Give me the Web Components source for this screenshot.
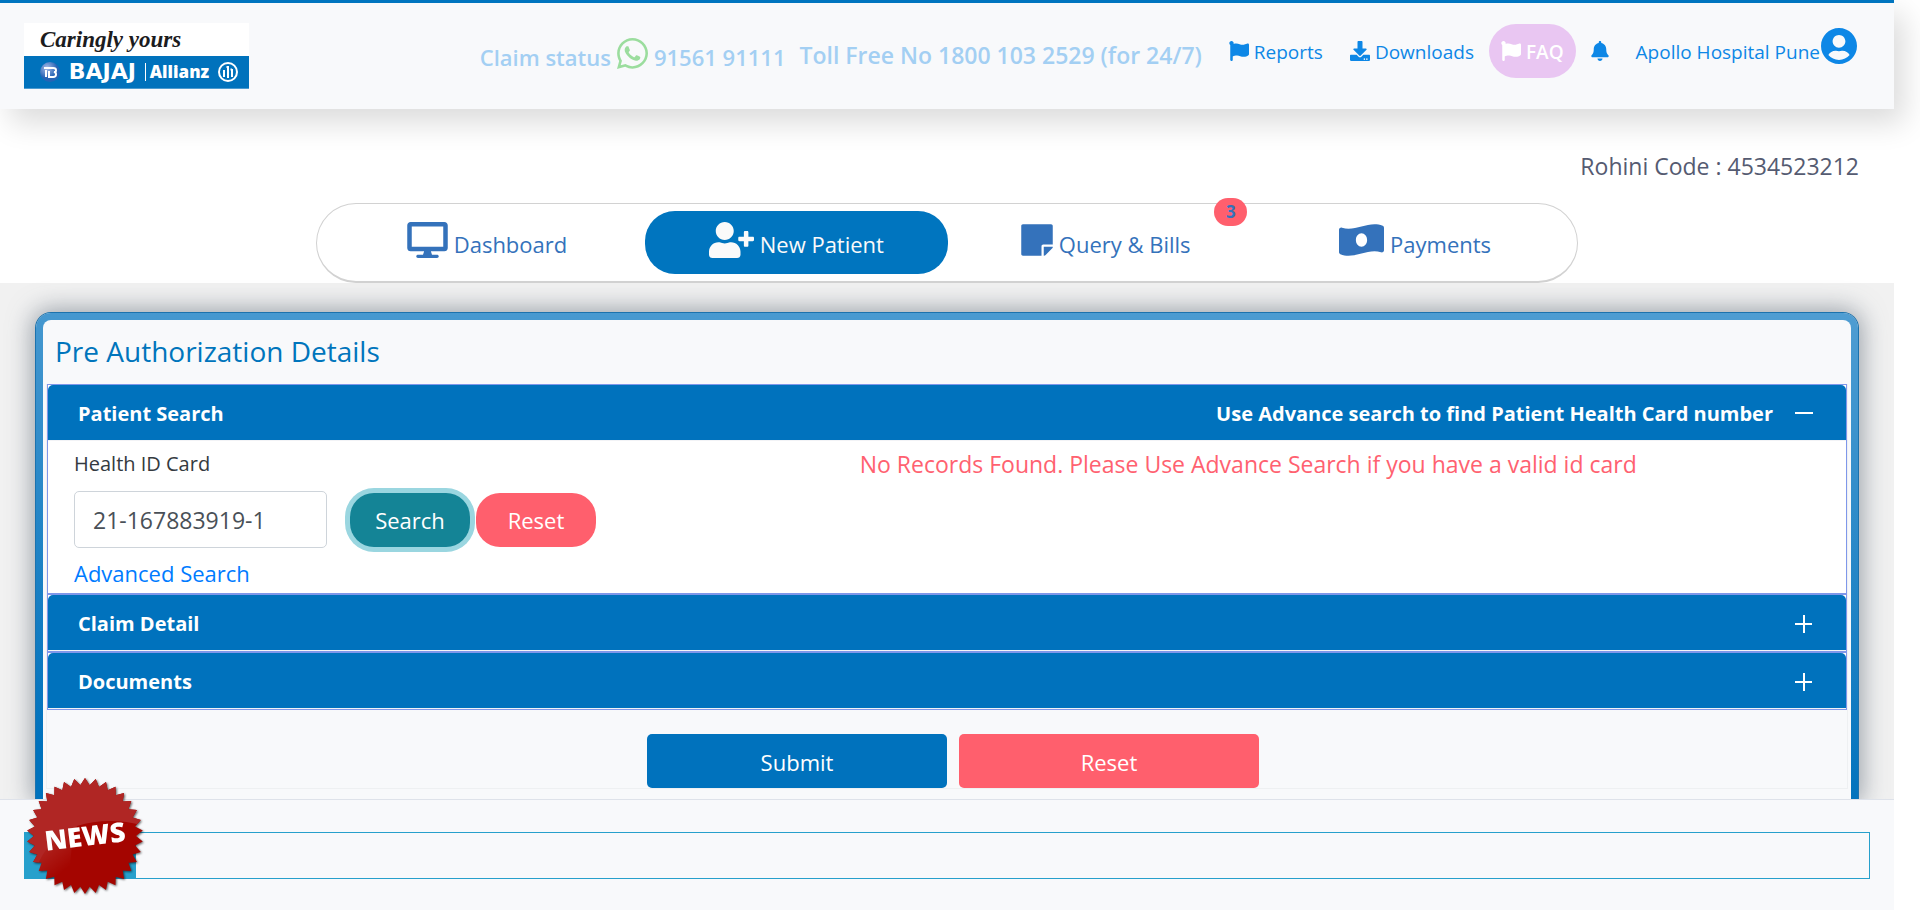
<!DOCTYPE html>
<html lang="en">
<head>
<meta charset="utf-8">
<title>Pre Authorization Details</title>
<style>
  html, body { margin: 0; background: #fff; }
  body { font-family: "Open Sans", "Noto Sans", sans-serif; font-size: 20px; color: #343a40; }
</style>
</head>
<body>
<portal-page>
  <site-header slot="header"></site-header>
  <main-tabs slot="tabs"></main-tabs>
  <auth-panel slot="content" heading="Pre Authorization Details">
    <accordion-item heading="Patient Search" note="Use Advance search to find Patient Health Card number" open>
      <patient-search></patient-search>
    </accordion-item>
    <accordion-item heading="Claim Detail"></accordion-item>
    <accordion-item heading="Documents"></accordion-item>
  </auth-panel>
  <news-ticker slot="footer"></news-ticker>
</portal-page>

<script>
const ICONS = {
  flag: ['0 0 512 512', 'M349.565 98.783C295.978 98.783 251.721 64 184.348 64c-24.955 0-47.309 4.384-68.045 12.013a55.947 55.947 0 0 0 3.586-23.562C118.117 24.015 94.806 1.206 66.338.048 34.345-1.254 8 24.296 8 56c0 19.026 9.497 35.825 24 45.945V488c0 13.255 10.745 24 24 24h16c13.255 0 24-10.745 24-24v-94.4c28.311-12.064 63.582-22.122 114.435-22.122 53.588 0 97.844 34.783 165.217 34.783 48.169 0 86.667-16.294 122.505-40.858C506.84 359.452 512 349.571 512 339.045v-243.1c0-23.393-24.269-38.87-45.485-29.016-34.338 15.948-76.454 31.854-116.95 31.854z'],
  download: ['0 0 512 512', 'M216 0h80c13.3 0 24 10.7 24 24v168h87.7c17.8 0 26.7 21.5 14.1 34.1L269.7 378.3c-7.5 7.5-19.8 7.5-27.3 0L90.1 226.1c-12.6-12.6-3.7-34.1 14.1-34.1H192V24c0-13.3 10.7-24 24-24zm296 376v112c0 13.3-10.7 24-24 24H24c-13.3 0-24-10.7-24-24V376c0-13.3 10.7-24 24-24h146.7l49 49c20.1 20.1 52.5 20.1 72.6 0l49-49H488c13.3 0 24 10.7 24 24zm-124 88c0-11-9-20-20-20s-20 9-20 20 9 20 20 20 20-9 20-20zm64 0c0-11-9-20-20-20s-20 9-20 20 9 20 20 20 20-9 20-20z'],
  bell: ['0 0 448 512', 'M224 512c35.32 0 63.97-28.65 63.97-64H160.03c0 35.35 28.65 64 63.97 64zm215.39-149.71c-19.32-20.76-55.47-51.99-55.47-154.29 0-77.7-54.48-139.9-127.94-155.16V32c0-17.67-14.32-32-31.98-32s-31.98 14.33-31.98 32v20.84C118.56 68.1 64.08 130.3 64.08 208c0 102.3-36.15 133.53-55.47 154.29-6 6.45-8.66 14.16-8.61 21.71.11 16.4 12.98 32 32.1 32h383.8c19.12 0 32-15.6 32.1-32 .05-7.55-2.61-15.27-8.61-21.71z'],
  user: ['0 8 496 496', 'M248 8C111 8 0 119 0 256s111 248 248 248 248-111 248-248S385 8 248 8zm0 96c48.6 0 88 39.4 88 88s-39.4 88-88 88-88-39.4-88-88 39.4-88 88-88zm0 344c-58.7 0-111.3-26.6-146.5-68.2 18.8-35.4 55.6-59.8 98.5-59.8 2.4 0 4.8.4 7.1 1.1 13 4.2 26.6 6.9 40.9 6.9 14.3 0 28-2.7 40.9-6.9 2.3-.7 4.7-1.1 7.1-1.1 42.9 0 79.7 24.4 98.5 59.8C359.3 421.4 306.7 448 248 448z'],
  addUser: ['0 0 640 512', 'M624 208h-64v-64c0-8.8-7.2-16-16-16h-32c-8.8 0-16 7.2-16 16v64h-64c-8.8 0-16 7.2-16 16v32c0 8.8 7.2 16 16 16h64v64c0 8.8 7.2 16 16 16h32c8.8 0 16-7.2 16-16v-64h64c8.8 0 16-7.2 16-16v-32c0-8.8-7.2-16-16-16zm-400 48c70.7 0 128-57.3 128-128S294.7 0 224 0 96 57.3 96 128s57.3 128 128 128zm89.6 32h-16.7c-22.2 10.2-46.9 16-72.9 16s-50.6-5.8-72.9-16h-16.7C60.2 288 0 348.2 0 422.4V464c0 26.5 21.5 48 48 48h352c26.5 0 48-21.5 48-48v-41.6c0-74.2-60.2-134.4-134.4-134.4z'],
  desktop: ['0 0 576 512', 'M528 0H48C21.5 0 0 21.5 0 48v320c0 26.5 21.5 48 48 48h192l-16 48h-72c-13.3 0-24 10.7-24 24s10.7 24 24 24h272c13.3 0 24-10.7 24-24s-10.7-24-24-24h-72l-16-48h192c26.5 0 48-21.5 48-48V48c0-26.5-21.5-48-48-48zm-16 352H64V64h448v288z'],
  note: ['0 0 448 512', 'M312 320h136V56c0-13.3-10.7-24-24-24H24C10.7 32 0 42.7 0 56v400c0 13.3 10.7 24 24 24h264V344c0-13.2 10.8-24 24-24zm129 55l-98 98c-4.5 4.5-10.6 7-17 7h-6V352h128v6.1c0 6.3-2.5 12.4-7 16.9z'],
  money: ['0 0 640 512', 'M621.16 54.46C582.37 38.19 543.55 32 504.75 32c-123.17-.01-246.33 62.34-369.5 62.34-30.89 0-61.76-3.92-92.65-13.72-3.47-1.1-6.95-1.62-10.35-1.62C15.04 79 0 92.32 0 110.81v317.26c0 12.63 7.23 24.6 18.84 29.46C57.63 473.81 96.45 480 135.25 480c123.17 0 246.34-62.35 369.51-62.35 30.89 0 61.76 3.92 92.65 13.72 3.47 1.1 6.95 1.62 10.35 1.62 17.21 0 32.25-13.32 32.25-31.81V83.93c-.01-12.64-7.24-24.6-18.85-29.47zM320 352c-44.19 0-80-42.99-80-96 0-53.02 35.82-96 80-96s80 42.98 80 96c0 53.03-35.83 96-80 96z'],
  whatsapp: ['0 32 448 448', 'M380.9 97.1C339 55.1 283.2 32 223.9 32c-122.4 0-222 99.6-222 222 0 39.1 10.2 77.3 29.6 111L0 480l117.7-30.9c32.4 17.7 68.9 27 106.1 27h.1c122.3 0 224.1-99.6 224.1-222 0-59.3-25.2-115-67.1-157zm-157 341.6c-33.2 0-65.7-8.9-94-25.7l-6.7-4-69.8 18.3L72 359.2l-4.4-7c-18.5-29.4-28.2-63.3-28.2-98.2 0-101.7 82.8-184.5 184.6-184.5 49.3 0 95.6 19.2 130.4 54.1 34.8 34.9 56.2 81.2 56.1 130.5 0 101.8-84.9 184.6-186.6 184.6zm101.2-138.2c-5.5-2.8-32.8-16.2-37.9-18-5.1-1.9-8.8-2.8-12.5 2.8-3.7 5.6-14.3 18-17.6 21.8-3.2 3.7-6.5 4.2-12 1.4-32.6-16.3-54-29.1-75.5-66-5.7-9.8 5.7-9.1 16.3-30.3 1.8-3.7.9-6.9-.5-9.7-1.4-2.8-12.5-30.1-17.1-41.2-4.5-10.8-9.1-9.3-12.5-9.5-3.2-.2-6.9-.2-10.6-.2-3.7 0-9.7 1.4-14.8 6.9-5.1 5.6-19.4 19-19.4 46.3 0 27.3 19.9 53.7 22.6 57.4 2.8 3.7 39.1 59.7 94.8 83.8 35.2 15.2 49 16.5 66.6 13.9 10.7-1.6 32.8-13.4 37.4-26.4 4.6-13 4.6-24.1 3.2-26.4-1.3-2.5-5-3.9-10.5-6.6z']
};

function define(name, render) {
  customElements.define(name, class extends HTMLElement {
    connectedCallback() {
      if (this.shadowRoot) return;
      const t = document.createElement('template');
      t.innerHTML = render(this);
      this.attachShadow({ mode: 'open' }).append(t.content.cloneNode(true));
    }
  });
}

define('fa-icon', el => {
  const [box, path] = ICONS[el.getAttribute('name')];
  return `<style>
    :host { display: block; flex: none; width: var(--icon-w, 20px); height: var(--icon-h, 20px); }
    svg { display: block; width: 100%; height: 100%; fill: currentColor; }
  </style><svg viewBox="${box}" aria-hidden="true"><path d="${path}"/></svg>`;
});

define('portal-page', () => `<style>
  :host { display: flex; flex-direction: column; min-height: 100vh; padding-right: 26px; box-sizing: border-box; }
  .code { margin: 40px 35px 20px; text-align: right; font-size: 23px; line-height: 34px; color: #555b71; }
  ::slotted([slot=header]) { position: relative; z-index: 1; }
  ::slotted([slot=footer]) { position: relative; z-index: 1; }
  main { display: flex; flex: 1; flex-direction: column; padding: 30px 36px 0; background: #f1f1f1; }
</style>
<slot name="header"></slot>
<div class="code">Rohini Code : 4534523212</div>
<slot name="tabs"></slot>
<main><slot name="content"></slot></main>
<slot name="footer"></slot>`);

define('brand-logo', () => `<style>
  :host { display: block; width: 225px; flex: none; }
  .tag, .bar { display: flex; align-items: center; height: 33px; box-sizing: border-box; }
  .tag { padding: 0 16px; background: #fff; color: #1c1c1e; font: italic bold 23px/30px "Liberation Serif", serif; }
  .bar { justify-content: space-between; padding: 0 11px 0 16px; background: #0072bc; color: #fff; border-bottom: 1px solid #4c9bd0; }
  svg { display: block; }
  .bajaj { font: bold 22px/32px "DejaVu Sans", sans-serif; }
  .allianz { padding-left: 4px; border-left: 1px solid #fff; font-size: 17px; font-weight: 800; line-height: 18px; }
</style>
<div class="tag">Caringly yours</div>
<div class="bar">
  <svg width="20" height="20" viewBox="0 0 20 20" aria-hidden="true">
    <defs><radialGradient id="g" cx=".35" cy=".3"><stop offset="0" stop-color="#a9bce8"/><stop offset="1" stop-color="#2663b4"/></radialGradient></defs>
    <circle cx="10" cy="10" r="10" fill="url(#g)"/>
    <path d="M4 6h9q3 0 3 2.300t-2 1.700q2 0 2 2.400T13 15H9V9M6 15V8" fill="none" stroke="#fff" stroke-width="2"/>
  </svg>
  <span class="bajaj">BAJAJ</span>
  <span class="allianz">Allianz</span>
  <svg width="20" height="20" viewBox="0 0 20 20" aria-hidden="true" fill="none" stroke="#fff">
    <circle cx="10" cy="10" r="9" stroke-width="2"/>
    <path d="M10 4v12M8.500 5H10M6 8v7M14 7v8M12.500 7.500H14" stroke-width="2"/>
  </svg>
</div>`);

define('site-header', () => `<style>
  :host { display: flex; justify-content: space-between; gap: 24px; padding: 20px 37px 20px 24px;
    border-top: 3px solid #0075bf; background: #f8f9fb; box-shadow: 10px 14px 28px rgba(0, 0, 0, .14); }
  nav { display: flex; align-items: center; height: 56px; color: #0d87e6; font-size: 19px; line-height: 28px; }
  a { display: flex; align-items: center; gap: 5px; color: inherit; text-decoration: none; white-space: nowrap; }
  .text { padding-top: 2px; }
  .claim, .toll { display: flex; align-items: center; color: #a3cff3; font-weight: 600; white-space: nowrap; }
  .claim { gap: 6px; padding-top: 12px; font-size: 22px; --icon-w: 31px; --icon-h: 31px; }
  .claim fa-icon { color: #9bdd9e; margin-bottom: 8px; }
  .toll { margin: 0 27px 0 14px; padding-top: 8px; font-size: 23px; }
  .faq { margin: 0 15px; padding: 12px; border-radius: 27px; background: #e9c6f2; color: #fff; font-weight: 600; }
  .reports { margin-right: 27px; }
  .bell { margin-right: 27px; --icon-w: 18px; }
  .user { gap: 1px; --icon-w: 36px; --icon-h: 36px; }
  .user fa-icon { margin-bottom: 10px; }
</style>
<brand-logo></brand-logo>
<nav aria-label="Account">
  <span class="claim">Claim status <fa-icon name="whatsapp"></fa-icon> <span>91561 91111</span></span>
  <span class="toll">Toll Free No 1800 103 2529 (for 24/7)</span>
  <a class="reports" href="#reports"><fa-icon name="flag"></fa-icon><span class="text">Reports</span></a>
  <a href="#downloads"><fa-icon name="download"></fa-icon><span class="text">Downloads</span></a>
  <a class="faq" href="#faq"><fa-icon name="flag"></fa-icon><span class="text">FAQ</span></a>
  <a class="bell" href="#alerts" aria-label="Notifications"><fa-icon name="bell"></fa-icon></a>
  <a class="user" href="#account"><span class="text">Apollo Hospital Pune</span><fa-icon name="user"></fa-icon></a>
</nav>`);

define('main-tabs', () => `<style>
  :host { display: block; margin: 0 16.7%; }
  nav { display: flex; gap: 6px; padding: 7px 10px 7px 18px; border: 1px solid #d2d2d2; border-bottom-width: 2px; border-radius: 40px; }
  a { position: relative; display: flex; flex: 1; align-items: center; justify-content: center; gap: 6px; height: 63px;
    border-radius: 30px; color: #3472bb; font-size: 22px; line-height: 32px; text-decoration: none; white-space: nowrap; --icon-h: 36px; }
  a.active { background: #0075bf; color: #fafafa; }
  fa-icon { margin-bottom: 6px; }
  a span { padding-top: 2px; }
  b { position: absolute; top: -13px; right: 10px; min-width: 33px; border-radius: 14px; background: #ff5f6d; font-size: 17px; line-height: 28px; text-align: center; }
</style>
<nav aria-label="Main">
  <a href="#dashboard" style="--icon-w:41px"><fa-icon name="desktop"></fa-icon><span>Dashboard</span></a>
  <a class="active" href="#new" aria-current="page" style="--icon-w:45px"><fa-icon name="addUser"></fa-icon><span>New Patient</span></a>
  <a href="#query" style="--icon-w:32px"><fa-icon name="note"></fa-icon><span>Query &amp; Bills</span><b>3</b></a>
  <a href="#payments" style="--icon-w:45px"><fa-icon name="money"></fa-icon><span>Payments</span></a>
</nav>`);

define('auth-panel', el => `<style>
  :host { display: block; flex: 1; padding-bottom: 10px; border: 7px solid transparent; border-bottom: 0; border-radius: 15px 15px 0 0;
    background: linear-gradient(#f8f9fb, #f8f9fb) padding-box, linear-gradient(182deg, #4f9dd2, #0072bd 90%) border-box;
    box-shadow: 0 0 0 1px #1c72ad, 0 0 24px 4px rgba(84, 96, 112, .55); }
  h1 { margin: 0; padding: 0 12px 2px; color: #0075bc; font-size: 28px; font-weight: 400; line-height: 62px; }
  .card { margin: 0 3px; border: 1px solid #eef0f2; border-top: 0; }
  .actions { display: flex; justify-content: center; gap: 12px; padding: 24px 0 0 12px; }
  button { width: 300px; height: 54px; padding: 2px 0 0; border: 0; border-radius: 5px; background: #0072bd; color: #fff; font: inherit; font-size: 22px; cursor: pointer; }
  .reset { background: #ff5f6d; }
</style>
<h1>${el.getAttribute('heading')}</h1>
<div class="card">
  <slot></slot>
  <div class="actions"><button type="submit">Submit</button><button class="reset" type="reset">Reset</button></div>
</div>`);

define('accordion-item', el => {
  const open = el.hasAttribute('open');
  return `<style>
  :host { display: block; border: 1px solid #7f97ea; background: #fff; }
  h2 { margin: 0; border-bottom: 1px solid #f2f3f6; font-size: inherit; }
  button { display: flex; align-items: center; width: 100%; height: 55px; padding: 2px 33px 0 30px; border: 0; border-radius: 5px 5px 0 0;
    background: #0072bd; color: #fff; font: inherit; font-weight: 700; text-align: left; cursor: pointer; }
  .note { margin-left: auto; padding-right: 22px; }
  svg { display: block; stroke: #fff; stroke-width: 2; fill: none; }
</style>
<h2><button type="button" aria-expanded="${open}"><span>${el.getAttribute('heading')}</span><span class="note">${el.getAttribute('note') || ''}</span>
<svg width="18" height="18" viewBox="0 0 18 18" aria-hidden="true"><path d="${open ? 'M0 8h18' : 'M0 9h17M9 0v18'}"/></svg></button></h2>
<slot></slot>`;
});

define('patient-search', () => `<style>
  :host { display: block; }
  form { display: grid; grid-template-columns: 45% 55%; padding: 7px 26px 4px; }
  label { display: block; margin-bottom: 11px; line-height: 32px; }
  .row { display: flex; align-items: center; gap: 6px; }
  input { width: 253px; height: 57px; margin: 0 17px 0 0; padding: 0 18px; box-sizing: border-box; border: 1px solid #ced4da; border-radius: 5px;
    background: #fff; color: #495057; font: inherit; font-size: 23px; }
  button { width: 120px; height: 54px; padding: 0; border: 0; border-radius: 24px; background: #ff5f6d; color: #fff; font: inherit; font-size: 22px; cursor: pointer; }
  .search { background: #148496; box-shadow: 0 0 0 5px #9ad6e0; }
  a { display: inline-block; margin-top: 9px; color: #007bff; font-size: 22px; line-height: 32px; text-decoration: none; vertical-align: top; }
  p { margin: 0; color: #ff6170; font-size: 23px; line-height: 32px; }
</style>
<form onsubmit="return false">
  <div>
    <label for="card">Health ID Card</label>
    <div class="row">
      <input id="card" type="text" value="21-167883919-1">
      <button class="search" type="submit">Search</button>
      <button type="reset">Reset</button>
    </div>
    <a href="#advanced">Advanced Search</a>
  </div>
  <p role="alert">No Records Found. Please Use Advance Search if you have a valid id card</p>
</form>`);

define('news-ticker', () => {
  const teeth = 34, pts = [];
  for (let i = 0; i < teeth * 2; i++) {
    const r = i % 2 ? 51 : 58, a = Math.PI * i / teeth - Math.PI / 2;
    pts.push((60 + r * Math.cos(a)).toFixed(1) + ',' + (60 + r * Math.sin(a)).toFixed(1));
  }
  return `<style>
  :host { display: block; padding: 32px 24px 31px; border-top: 1px solid #dee2ea; background: #f8f9fb; }
  .strip { position: relative; border: 1px solid #27a0cc; }
  .label { width: 111px; height: 45px; background: #27a0cc; }
  svg { position: absolute; top: -57px; left: 0; overflow: visible; filter: drop-shadow(1px 1px 1px rgba(0, 0, 0, .6)); }
  text { font: 800 27px "Open Sans", sans-serif; fill: #fff; }
</style>
<div class="strip"><div class="label"></div>
<svg width="120" height="120" viewBox="0 0 120 120" role="img" aria-label="News">
  <defs>
    <clipPath id="star"><polygon points="${pts.join(' ')}"/></clipPath>
    <linearGradient id="shine" x1="0" y1="0" x2=".6" y2="1"><stop offset=".3" stop-color="#fff" stop-opacity=".14"/><stop offset=".8" stop-color="#fff" stop-opacity="0"/></linearGradient>
  </defs>
  <polygon points="${pts.join(' ')}" fill="#a40500"/>
  <g clip-path="url(#star)">
    <path d="M0 0H120V50Q84 40 52 50Q16 66 8 104L0 110Z" fill="#b02624"/>
    <path d="M8 104Q16 66 52 50Q42 80 46 120H0Z" fill="url(#shine)"/>
  </g>
  <text x="60" y="70" text-anchor="middle" transform="rotate(-7 60 60)">NEWS</text>
</svg></div>`;
});
</script>
</body>
</html>
